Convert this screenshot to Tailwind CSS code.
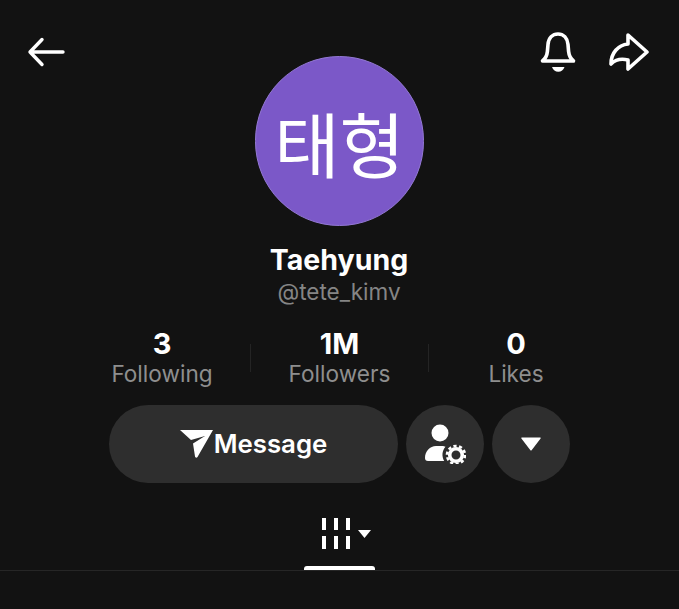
<!DOCTYPE html>
<html lang="en">
<head>
  <meta charset="UTF-8" />
  <meta name="viewport" content="width=device-width, initial-scale=1.0"/>
  <title>Taehyung</title>
  <script src="https://cdn.jsdelivr.net/npm/@tailwindcss/browser@4"></script>
</head>
<body class="bg-[#121212] h-[609px] overflow-hidden text-white font-['Inter','Liberation_Sans',sans-serif]">
  <!-- top bar -->
  <div class="flex items-start justify-between h-[56px] pt-[30px] pl-[27px] pr-[30px]">
    <svg class="w-[40px] h-[44px]" viewBox="0 0 40 44" fill="none" stroke="white" stroke-width="3.4" stroke-linecap="round" stroke-linejoin="round">
      <path d="M36 22H3M15 9.5 3 22l12 12.500"/>
    </svg>
    <div class="flex items-center gap-[30px]">
      <svg class="w-[38px] h-[44px]" viewBox="0 0 38 44" fill="none" stroke="white" stroke-width="3.600" stroke-linecap="round" stroke-linejoin="round">
        <path d="M3.500 31c3-2.500 4.500-5.500 4.900-9.500l.6-7c.6-6.500 4.500-10.500 10-10.500s9.400 4 10 10.500l.6 7c.4 4 1.900 7 4.900 9.500z"/>
        <path d="M13 37h12.500c-1 3-3.400 4.800-6.250 4.800S14 40 13 37z" fill="white" stroke="none"/>
      </svg>
      <svg class="w-[42px] h-[44px]" viewBox="0 0 42 44" fill="none" stroke="white" stroke-width="3.600" stroke-linecap="round" stroke-linejoin="round">
        <path d="M21 5 40 22 21 39V30C13 28 8 30 4 34 4 23 11 15 21 14z"/>
      </svg>
    </div>
  </div>

  <main class="flex flex-col items-center w-[678px]">
    <!-- avatar -->
    <div class="w-[169px] h-[170px] ml-[1px] rounded-full bg-[#7b58c8] border border-[#9378d4] flex items-center justify-center">
      <span class="text-[71px] leading-none text-white font-['Noto_Sans_CJK_KR',sans-serif]">태형</span>
    </div>

    <h1 class="mt-[16px] text-[28.500px] leading-[35px] font-bold">Taehyung</h1>
    <p class="text-[22.500px] leading-[28px] mt-[1px] text-[#858585]">@tete_kimv</p>

    <!-- stats -->
    <div class="mt-[21px] self-start ml-[72px] flex items-center">
      <div class="w-[178px] pl-[2px] flex flex-col items-center">
        <span class="text-[29px] leading-[34px] font-bold">3</span>
        <span class="text-[22.600px] leading-[26px] pb-[1px] text-[#8e8e8e]">Following</span>
      </div>
      <div class="w-px h-[28px] bg-[#242424]"></div>
      <div class="w-[177px] flex flex-col items-center">
        <span class="text-[29px] leading-[34px] font-bold">1M</span>
        <span class="text-[22.600px] leading-[26px] pb-[1px] text-[#8e8e8e]">Followers</span>
      </div>
      <div class="w-px h-[28px] bg-[#242424]"></div>
      <div class="w-[174px] flex flex-col items-center">
        <span class="text-[29px] leading-[34px] font-bold">0</span>
        <span class="text-[22.600px] leading-[26px] pb-[1px] text-[#8e8e8e]">Likes</span>
      </div>
    </div>

    <!-- actions -->
    <div class="mt-[17px] flex gap-[8px]">
      <button class="w-[289px] ml-[1px] h-[78px] rounded-full bg-[#2e2e2e] flex items-center justify-center gap-[1px]">
        <svg class="w-[33px] h-[28px]" viewBox="0 0 33 28" fill="white">
          <path d="M0 0h33L17.500 27c-.7 1.200-2.300 1-2.500-.4L13 13.500 25 6 11 10z"/>
        </svg>
        <span class="text-[25.800px] font-semibold leading-none">Message</span>
      </button>
      <button class="w-[78px] h-[78px] rounded-full bg-[#2e2e2e] flex items-center justify-center">
        <svg class="w-[42px] h-[40px]" viewBox="0 0 42 40" fill="white">
          <circle cx="16" cy="9" r="8.500"/>
          <path d="M1 34c0-7 5-12 11-12h6c1.500 0 2.500.3 3.500.8-3.500 4-4 9.500-1.300 14.200H4c-2 0-3-1-3-3z"/>
          <circle cx="32" cy="31" r="6.300" fill="none" stroke="white" stroke-width="3.600"/>
          <circle cx="32" cy="31" r="9" fill="none" stroke="white" stroke-width="2.600" stroke-dasharray="3.200 2.450"/>
        </svg>
      </button>
      <button class="w-[78px] h-[78px] rounded-full bg-[#2e2e2e] flex items-center justify-center">
        <svg class="w-[20px] h-[14px]" viewBox="0 0 20 14" fill="white">
          <path d="M1 .5h18c.6 0 .9.6.6 1.100L10.600 13.300c-.3.4-.9.4-1.200 0L.4 1.600C.1 1.100.4.500 1 .5z"/>
        </svg>
      </button>
    </div>

    <!-- tabs -->
    <div class="mt-[31px] w-[679px] self-start border-b border-[#262626] flex justify-center h-[57px] pr-[1px]">
      <div class="relative w-[71px] h-[56px]">
        <div class="flex items-start gap-[8px] pt-[4px] pl-[18px]">
          <div class="flex gap-[8px]">
            <div class="w-[4px] h-[31px] bg-[linear-gradient(white_0_12px,transparent_12px_18px,white_18px)]"></div>
            <div class="w-[4px] h-[31px] bg-[linear-gradient(white_0_12px,transparent_12px_18px,white_18px)]"></div>
            <div class="w-[4px] h-[31px] bg-[linear-gradient(white_0_12px,transparent_12px_18px,white_18px)]"></div>
          </div>
          <svg class="w-[13px] h-[8px] mt-[12px]" viewBox="0 0 13 8" fill="white"><path d="M0 0h13L6.500 8z"/></svg>
        </div>
        <div class="absolute left-0 right-0 bottom-0 h-[4px] bg-white rounded-t-[3px]"></div>
      </div>
    </div>
  </main>
</body>
</html>
